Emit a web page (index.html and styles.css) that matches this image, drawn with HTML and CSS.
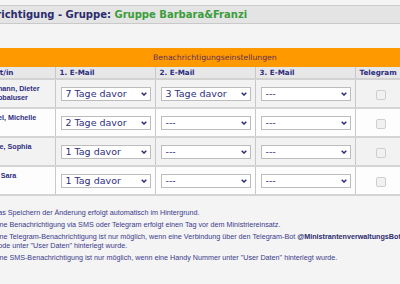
FILE: index.html
```html
<!DOCTYPE html>
<html lang="de">
<head>
    <meta charset="UTF-8">
    <meta name="viewport" content="width=device-width, initial-scale=1.0">
    <title>Benachrichtigung - Gruppe</title>
    <link rel="stylesheet" href="styles.css">
</head>
<body>
<div class="page">
    <div class="titlebar"><span class="title-label">Benachrichtigung - Gruppe: </span><span class="title-group">Gruppe Barbara&amp;Franzi</span></div>

    <table class="notify">
        <colgroup>
            <col class="col-name">
            <col class="col-mail">
            <col class="col-mail">
            <col class="col-mail">
            <col class="col-tg">
        </colgroup>
        <tr class="banner"><td colspan="5">Benachrichtigungseinstellungen</td></tr>
        <tr class="head">
            <th class="name-head">Ministrant/in</th>
            <th>1. E-Mail</th>
            <th>2. E-Mail</th>
            <th>3. E-Mail</th>
            <th>Telegram</th>
        </tr>
        <tr class="odd">
            <td class="name">Zimmermann, Dieter<br>Stadt-Globaluser</td>
            <td><div class="select"><span>7 Tage davor</span><svg width="6" height="4" viewBox="0 0 6 4"><path d="M0.7 0.7 L3 3 L5.3 0.7" fill="none" stroke="#2e2e80" stroke-width="1.5"/></svg></div></td>
            <td><div class="select"><span>3 Tage davor</span><svg width="6" height="4" viewBox="0 0 6 4"><path d="M0.7 0.7 L3 3 L5.3 0.7" fill="none" stroke="#2e2e80" stroke-width="1.5"/></svg></div></td>
            <td><div class="select"><span>---</span><svg width="6" height="4" viewBox="0 0 6 4"><path d="M0.7 0.7 L3 3 L5.3 0.7" fill="none" stroke="#2e2e80" stroke-width="1.5"/></svg></div></td>
            <td class="tg"><span class="check"></span></td>
        </tr>
        <tr class="even">
            <td class="name">Schimmel, Michelle</td>
            <td><div class="select"><span>2 Tage davor</span><svg width="6" height="4" viewBox="0 0 6 4"><path d="M0.7 0.7 L3 3 L5.3 0.7" fill="none" stroke="#2e2e80" stroke-width="1.5"/></svg></div></td>
            <td><div class="select"><span>---</span><svg width="6" height="4" viewBox="0 0 6 4"><path d="M0.7 0.7 L3 3 L5.3 0.7" fill="none" stroke="#2e2e80" stroke-width="1.5"/></svg></div></td>
            <td><div class="select"><span>---</span><svg width="6" height="4" viewBox="0 0 6 4"><path d="M0.7 0.7 L3 3 L5.3 0.7" fill="none" stroke="#2e2e80" stroke-width="1.5"/></svg></div></td>
            <td class="tg"><span class="check"></span></td>
        </tr>
        <tr class="odd">
            <td class="name">Kronfelde, Sophia</td>
            <td><div class="select"><span>1 Tag davor</span><svg width="6" height="4" viewBox="0 0 6 4"><path d="M0.7 0.7 L3 3 L5.3 0.7" fill="none" stroke="#2e2e80" stroke-width="1.5"/></svg></div></td>
            <td><div class="select"><span>---</span><svg width="6" height="4" viewBox="0 0 6 4"><path d="M0.7 0.7 L3 3 L5.3 0.7" fill="none" stroke="#2e2e80" stroke-width="1.5"/></svg></div></td>
            <td><div class="select"><span>---</span><svg width="6" height="4" viewBox="0 0 6 4"><path d="M0.7 0.7 L3 3 L5.3 0.7" fill="none" stroke="#2e2e80" stroke-width="1.5"/></svg></div></td>
            <td class="tg"><span class="check"></span></td>
        </tr>
        <tr class="even">
            <td class="name">Schröer, Sara</td>
            <td><div class="select"><span>1 Tag davor</span><svg width="6" height="4" viewBox="0 0 6 4"><path d="M0.7 0.7 L3 3 L5.3 0.7" fill="none" stroke="#2e2e80" stroke-width="1.5"/></svg></div></td>
            <td><div class="select"><span>---</span><svg width="6" height="4" viewBox="0 0 6 4"><path d="M0.7 0.7 L3 3 L5.3 0.7" fill="none" stroke="#2e2e80" stroke-width="1.5"/></svg></div></td>
            <td><div class="select"><span>---</span><svg width="6" height="4" viewBox="0 0 6 4"><path d="M0.7 0.7 L3 3 L5.3 0.7" fill="none" stroke="#2e2e80" stroke-width="1.5"/></svg></div></td>
            <td class="tg"><span class="check"></span></td>
        </tr>
    </table>

    <div class="notes">
        <p>Das Speichern der Änderung erfolgt automatisch im Hintergrund.</p>
        <p>Eine Benachrichtigung via SMS oder Telegram erfolgt einen Tag vor dem Ministriereinsatz.</p>
        <p>Eine Telegram-Benachrichtigung ist nur möglich, wenn eine Verbindung über den Telegram-Bot <b>@MinistrantenverwaltungsBot</b><br>Code unter "User Daten" hinterlegt wurde.</p>
        <p>Eine SMS-Benachrichtigung ist nur möglich, wenn eine Handy Nummer unter "User Daten" hinterlegt wurde.</p>
    </div>
</div>
</body>
</html>
```

FILE: styles.css
```css
html {
    overflow: hidden;
}
body {
    margin: 0;
    background: #f4f4f4;
    font-family: "DejaVu Sans", Verdana, sans-serif;
    color: #2e2e80;
}
.page {
    width: 477px;
    margin-left: -70px;
    padding-top: 5px;
}
.titlebar {
    height: 17px;
    line-height: 17px;
    padding-left: 25px;
    background: #e4e4e4;
    border-top: 1px solid #cdcdcd;
    border-bottom: 1px solid #c9c9c9;
    font-size: 10px;
    font-weight: bold;
    color: #2b2b6e;
    white-space: nowrap;
}
.title-group {
    color: #3a9c3a;
}
.notify {
    margin-top: 24px;
    width: 477px;
    border-collapse: collapse;
    table-layout: fixed;
}
.col-name { width: 125px; }
.col-mail { width: 100px; }
.col-tg { width: 52px; }
.banner td {
    height: 19px;
    padding: 0 0 0 223px;
    background: #ff9900;
    font-size: 7.7px;
    color: #5a2d5a;
}
.head th {
    height: 11px;
    padding: 0 4px;
    background: #e7e7e7;
    border-right: 1px solid #c8c8c8;
    border-bottom: 2px solid #d2d2d2;
    text-align: left;
    font-size: 7.2px;
    line-height: 11px;
    white-space: nowrap;
}
.head .name-head {
    text-align: right;
    padding-right: 41px;
}
.odd td { background: #f2f2f2; }
.even td { background: #fdfdfd; }
.notify td {
    border-right: 1px solid #c8c8c8;
}
.odd td, .even td {
    height: 27px;
    padding: 0 5px;
    border-bottom: 2px solid #d4d4d4;
    vertical-align: middle;
}
.odd td.name, .even td.name {
    height: 23px;
    vertical-align: top;
    padding: 4px 0 0 40px;
    font-family: "Liberation Sans", Arial, sans-serif;
    font-weight: bold;
    font-size: 7.2px;
    line-height: 9px;
    white-space: nowrap;
}
.select {
    display: flex;
    align-items: center;
    justify-content: space-between;
    width: 90px;
    height: 14px;
    box-sizing: border-box;
    padding: 0 3px 0 4px;
    background: #fff;
    border: 1px solid #bcbcbc;
    font-size: 9.5px;
    line-height: 12px;
}
.notify td.tg {
    text-align: center;
}
.check {
    display: inline-block;
    width: 10px;
    height: 10px;
    box-sizing: border-box;
    border: 1px solid #cfcfcf;
    border-radius: 2px;
    background: #f1f1f1;
    vertical-align: middle;
}
.notes {
    margin-top: 13px;
    padding-left: 63px;
    font-family: "Liberation Sans", Arial, sans-serif;
    font-size: 7.2px;
    line-height: 8.6px;
    color: #3a3a8c;
    white-space: nowrap;
}
.notes p {
    margin: 0 0 3.4px;
}
.notes b {
    color: #2b2b6e;
}
```
